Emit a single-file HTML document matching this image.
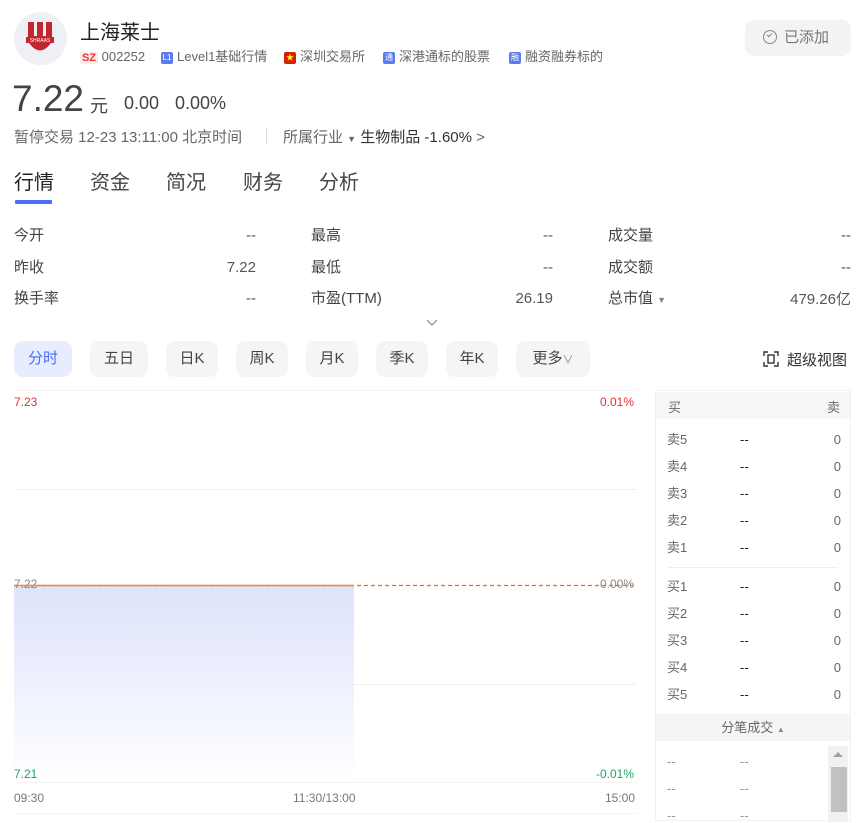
<!DOCTYPE html>
<html><head><meta charset="utf-8"><style>
*{margin:0;padding:0;box-sizing:border-box}
body{width:861px;height:821px;overflow:hidden;background:#fff;font-family:"Liberation Sans","Noto Sans CJK SC",sans-serif;color:#333;position:relative}
.a{position:absolute;white-space:nowrap}
.g{color:#666}
.tag{font-size:13px;color:#666;top:46px}
.ic{display:inline-block;width:12px;height:12px;border-radius:2px;background:#5b7cf0;color:#fff;font-size:8px;line-height:12px;text-align:center;vertical-align:1px;margin-right:4px}
.lbl{font-size:15px;color:#444}
.val{font-size:15px;color:#555;text-align:right}
.btn{position:absolute;top:341px;height:36px;border-radius:9px;background:#f5f5f5;font-size:15px;color:#444;text-align:center;line-height:36px}
.ob{font-size:13px;color:#666}
.ob .n{position:absolute;left:85px;color:#222}
.ob .z{position:absolute;right:10px;color:#666}
</style></head><body>
<div class="a" style="left:14px;top:12px;width:53px;height:53px;border-radius:50%;background:#eef0f6"></div>
<svg class="a" style="left:26px;top:22px" width="28" height="32" viewBox="0 0 28 32">
<rect x="2" y="0" width="24" height="16" fill="#c1272d"/><rect x="8" y="0" width="3" height="14" fill="#eef0f6"/><rect x="17" y="0" width="3" height="14" fill="#eef0f6"/>
<rect x="0" y="15" width="28" height="6" fill="#c1272d"/><text x="14" y="20" font-size="5" fill="#fff" text-anchor="middle" font-family="Liberation Sans">SHRAAS</text>
<path d="M3 21 Q14 36 25 21Z" fill="#c1272d"/></svg>
<div class="a" style="left:80px;top:16px;font-size:20px;color:#222">上海莱士</div>
<div class="a tag" style="left:80px;top:49px"><span style="color:#e33;font-weight:bold;font-size:11px;background:#fdeaea;padding:0 2px">SZ</span> 002252</div>
<div class="a tag" style="left:161px"><span class="ic">L1</span>Level1基础行情</div>
<div class="a tag" style="left:284px"><span class="ic" style="background:#d81e06;color:#ff0">★</span>深圳交易所</div>
<div class="a tag" style="left:383px"><span class="ic">通</span>深港通标的股票</div>
<div class="a tag" style="left:509px"><span class="ic">融</span>融资融券标的</div>
<div class="a" style="left:745px;top:20px;width:106px;height:36px;border-radius:9px;background:#f3f3f3;font-size:15px;color:#777;line-height:36px;padding-left:18px"><span style="display:inline-block;width:14px;height:14px;border:1.5px solid #888;border-radius:50%;vertical-align:-2px;margin-right:7px;position:relative"><span style="position:absolute;left:3px;top:2px;width:5px;height:3px;border-left:1.5px solid #888;border-bottom:1.5px solid #888;transform:rotate(-45deg)"></span></span>已添加</div>
<div class="a" style="left:12px;top:78px;font-size:37px;color:#444">7.22</div>
<div class="a" style="left:90px;top:92px;font-size:18px;color:#444">元</div>
<div class="a" style="left:124px;top:93px;font-size:18px;color:#444">0.00</div>
<div class="a" style="left:175px;top:93px;font-size:18px;color:#444">0.00%</div>
<div class="a g" style="left:14px;top:126px;font-size:15px">暂停交易 12-23 13:11:00 北京时间</div>
<div class="a" style="left:266px;top:128px;width:1px;height:16px;background:#ddd"></div>
<div class="a g" style="left:283px;top:126px;font-size:15px">所属行业 <span style="font-size:9px">▼</span> <span style="color:#333">生物制品 -1.60%</span> &gt;</div>
<div class="a" style="left:14px;top:166px;font-size:20px;color:#222">行情</div>
<div class="a" style="left:90px;top:166px;font-size:20px;color:#444">资金</div>
<div class="a" style="left:166px;top:166px;font-size:20px;color:#444">简况</div>
<div class="a" style="left:243px;top:166px;font-size:20px;color:#444">财务</div>
<div class="a" style="left:319px;top:166px;font-size:20px;color:#444">分析</div>
<div class="a" style="left:15px;top:200px;width:37px;height:4px;background:#4a6cf7;border-radius:1px"></div>
<div class="a lbl" style="left:14px;top:224px">今开</div><div class="a val" style="left:156px;width:100px;top:227px">--</div>
<div class="a lbl" style="left:14px;top:256px">昨收</div><div class="a val" style="left:156px;width:100px;top:259px">7.22</div>
<div class="a lbl" style="left:14px;top:287px">换手率</div><div class="a val" style="left:156px;width:100px;top:290px">--</div>
<div class="a lbl" style="left:311px;top:224px">最高</div><div class="a val" style="left:453px;width:100px;top:227px">--</div>
<div class="a lbl" style="left:311px;top:256px">最低</div><div class="a val" style="left:453px;width:100px;top:259px">--</div>
<div class="a lbl" style="left:311px;top:287px">市盈(TTM)</div><div class="a val" style="left:453px;width:100px;top:290px">26.19</div>
<div class="a lbl" style="left:608px;top:224px">成交量</div><div class="a val" style="left:751px;width:100px;top:227px">--</div>
<div class="a lbl" style="left:608px;top:256px">成交额</div><div class="a val" style="left:751px;width:100px;top:259px">--</div>
<div class="a lbl" style="left:608px;top:287px">总市值 <span style="font-size:9px;color:#888">▼</span></div><div class="a val" style="left:751px;width:100px;top:288px">479.26亿</div>
<svg class="a" style="left:426px;top:319px" width="12" height="8"><path d="M1 1 L6 6 L11 1" fill="none" stroke="#888" stroke-width="1.2"/></svg>
<div class="btn" style="left:14px;width:58px;background:#e8edfd;color:#4a6cf7">分时</div>
<div class="btn" style="left:90px;width:58px">五日</div>
<div class="btn" style="left:166px;width:52px">日K</div>
<div class="btn" style="left:236px;width:52px">周K</div>
<div class="btn" style="left:306px;width:52px">月K</div>
<div class="btn" style="left:376px;width:52px">季K</div>
<div class="btn" style="left:446px;width:52px">年K</div>
<div class="btn" style="left:516px;width:74px">更多<span style="font-size:11px;color:#888">∨</span></div>
<svg class="a" style="left:763px;top:351px" width="16" height="16"><path d="M1 5V1H5M11 1H15V5M15 11V15H11M5 15H1V11" fill="none" stroke="#333" stroke-width="1.4"/><rect x="5" y="4" width="6" height="8" fill="none" stroke="#333" stroke-width="1.4"/></svg>
<div class="a" style="left:787px;top:349px;font-size:15px;color:#333">超级视图</div>
<!-- chart -->
<div class="a" style="left:14px;top:390px;width:623px;height:1px;background:#f2f2f2"></div>
<div class="a" style="left:14px;top:489px;width:623px;height:1px;background:#f0f0f0"></div>
<div class="a" style="left:14px;top:684px;width:623px;height:1px;background:#f0f0f0"></div>
<div class="a" style="left:14px;top:782px;width:623px;height:1px;background:#f2f2f2"></div>
<div class="a" style="left:14px;top:813px;width:623px;height:1px;background:#f2f2f2"></div>
<div class="a" style="left:14px;top:586px;width:340px;height:195px;background:linear-gradient(#dde3fb,#fff)"></div>
<div class="a" style="left:14px;top:395px;font-size:12px;color:#e93030">7.23</div>
<div class="a" style="left:600px;top:395px;font-size:12px;color:#e93030">0.01%</div>
<div class="a" style="left:14px;top:577px;font-size:12px;color:#888">7.22</div>
<div class="a" style="left:600px;top:577px;font-size:12px;color:#888">0.00%</div>
<svg class="a" style="left:14px;top:583px" width="623" height="5"><line x1="0" y1="2.5" x2="623" y2="2.5" stroke="#ff6a00" stroke-width="1.3" stroke-dasharray="4,3"/><line x1="0" y1="2.5" x2="340" y2="2.5" stroke="#f08a40" stroke-width="1.5"/></svg>
<div class="a" style="left:14px;top:767px;font-size:12px;color:#1aa760">7.21</div>
<div class="a" style="left:596px;top:767px;font-size:12px;color:#1aa760">-0.01%</div>
<div class="a" style="left:14px;top:791px;font-size:12px;color:#777">09:30</div>
<div class="a" style="left:293px;top:791px;font-size:12px;color:#777">11:30/13:00</div>
<div class="a" style="left:605px;top:791px;font-size:12px;color:#777">15:00</div>
<!-- order book -->
<div class="a ob" style="left:655px;top:390px;width:196px;height:431px;border:1px solid #f2f2f2">
<div style="position:absolute;left:0;top:1px;width:194px;height:27px;background:#f7f7f7"></div>
<div style="position:absolute;left:12px;top:6px">买</div><div style="position:absolute;right:10px;top:6px">卖</div>
<div style="position:absolute;left:12px;right:12px;top:176px;height:1px;background:#eee"></div>
<div style="position:absolute;left:0;top:323px;width:194px;height:27px;background:#f5f5f5;text-align:center;line-height:27px">分笔成交 <span style="font-size:8px;color:#888">▲</span></div>
<div style="position:absolute;left:172px;top:355px;width:20px;height:76px;background:#f1f1f1"></div>
<div style="position:absolute;left:175px;top:376px;width:16px;height:45px;background:#c1c1c1"></div>
<div style="position:absolute;left:177px;top:361px;width:0;height:0;border:5px solid transparent;border-bottom-color:#a3a3a3;border-top:0"></div>
</div>
<div class="a ob" style="left:655px;top:0;width:196px">
<div style="position:absolute;top:429px;left:12px">卖5</div><span class="n" style="top:432px">--</span><span class="z" style="top:432px">0</span>
<div style="position:absolute;top:456px;left:12px">卖4</div><span class="n" style="top:459px">--</span><span class="z" style="top:459px">0</span>
<div style="position:absolute;top:483px;left:12px">卖3</div><span class="n" style="top:486px">--</span><span class="z" style="top:486px">0</span>
<div style="position:absolute;top:510px;left:12px">卖2</div><span class="n" style="top:513px">--</span><span class="z" style="top:513px">0</span>
<div style="position:absolute;top:537px;left:12px">卖1</div><span class="n" style="top:540px">--</span><span class="z" style="top:540px">0</span>
<div style="position:absolute;top:576px;left:12px">买1</div><span class="n" style="top:579px">--</span><span class="z" style="top:579px">0</span>
<div style="position:absolute;top:603px;left:12px">买2</div><span class="n" style="top:606px">--</span><span class="z" style="top:606px">0</span>
<div style="position:absolute;top:630px;left:12px">买3</div><span class="n" style="top:633px">--</span><span class="z" style="top:633px">0</span>
<div style="position:absolute;top:657px;left:12px">买4</div><span class="n" style="top:660px">--</span><span class="z" style="top:660px">0</span>
<div style="position:absolute;top:684px;left:12px">买5</div><span class="n" style="top:687px">--</span><span class="z" style="top:687px">0</span>
<div style="position:absolute;top:754px;left:12px;color:#999">--</div><span class="n" style="top:754px;color:#999">--</span>
<div style="position:absolute;top:781px;left:12px;color:#999">--</div><span class="n" style="top:781px;color:#999">--</span>
<div style="position:absolute;top:808px;left:12px;color:#999">--</div><span class="n" style="top:808px;color:#999">--</span>
</div>
</body></html>
